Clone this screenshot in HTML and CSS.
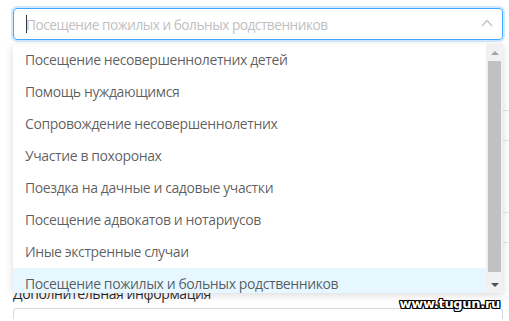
FILE: index.html
```html
<!DOCTYPE html>
<html lang="ru">
<head>
    <meta charset="UTF-8">
    <title>Выбор причины</title>
    <link rel="stylesheet" href="styles.css">
</head>
<body>
    <div class="form">
        <div class="select">
            <span class="caret"></span>
            <span class="placeholder">Посещение пожилых и больных родственников</span>
            <svg class="arrow" width="12" height="8" viewBox="0 0 12 8">
                <path d="M1 7 L6 1.5 L11 7" fill="none" stroke="#bfbfbf" stroke-width="1.2"/>
            </svg>
        </div>

        <div class="field field-one"></div>
        <div class="field field-two"></div>

        <label class="label">Дополнительная информация</label>
        <div class="textarea"></div>

        <div class="dropdown">
            <ul class="options">
                <li>Посещение несовершеннолетних детей</li>
                <li>Помощь нуждающимся</li>
                <li>Сопровождение несовершеннолетних</li>
                <li>Участие в похоронах</li>
                <li>Поездка на дачные и садовые участки</li>
                <li>Посещение адвокатов и нотариусов</li>
                <li>Иные экстренные случаи</li>
                <li class="active">Посещение пожилых и больных родственников</li>
            </ul>
            <div class="scrollbar">
                <span class="btn up"></span>
                <span class="thumb"></span>
                <span class="btn down"></span>
            </div>
        </div>
    </div>
    <div class="watermark">www.tugun.ru</div>
</body>
</html>
```

FILE: styles.css
```css
html {
    height: 321px;
    overflow: hidden;
}
body {
    margin: 0;
    background: #fff;
    font-family: "Open Sans", "Noto Sans", sans-serif;
    font-size: 14px;
    color: rgba(0, 0, 0, 0.65);
    overflow: hidden;
    height: 321px;
    position: relative;
}
.form {
    position: relative;
    padding: 8px 0 0 13px;
    width: 496px;
}
.select {
    height: 30px;
    border: 1px solid #40a9ff;
    border-radius: 4px;
    box-shadow: 0 0 0 2px rgba(24, 144, 255, 0.2);
    display: flex;
    align-items: center;
    padding: 0 9px 0 12px;
    width: 467px;
}
.caret {
    width: 1px;
    height: 18px;
    background: #333;
    margin-right: -1px;
}
.placeholder {
    flex: 1;
    color: #bfbfbf;
    font-size: 13.6px;
    letter-spacing: -0.45px;
}
.arrow {
    margin-top: -2px;
}
.field {
    height: 29px;
    border-top: 1px solid #e4e4e4;
    border-bottom: 1px solid #e4e4e4;
    width: 520px;
}
.field-one {
    margin-top: 70px;
}
.field-two {
    margin-top: 71px;
}
.label {
    display: block;
    margin-top: 40px;
    line-height: 22px;
    color: rgba(0, 0, 0, 0.85);
    letter-spacing: -0.4px;
}
.textarea {
    margin-top: 3px;
    width: 488px;
    height: 10px;
    border: 1px solid #d9d9d9;
    border-bottom: none;
    border-radius: 4px 4px 0 0;
}
.dropdown {
    position: absolute;
    top: 44px;
    left: 13px;
    width: 490px;
    height: 249px;
    background: #fff;
    box-shadow: 0 2px 8px rgba(0, 0, 0, 0.15);
    display: flex;
    overflow: hidden;
}
.options {
    list-style: none;
    margin: 0;
    padding: 0;
    flex: 1;
}
.options li {
    height: 32px;
    line-height: 32px;
    padding: 0 12px;
    white-space: nowrap;
    letter-spacing: -0.4px;
}
.options li.active {
    background: #e6f7ff;
}
.scrollbar {
    width: 17px;
    background: #f1f1f1;
    display: flex;
    flex-direction: column;
    align-items: center;
}
.btn {
    height: 17px;
    width: 17px;
    display: flex;
    align-items: center;
    justify-content: center;
}
.btn::after {
    content: "";
    border-left: 4px solid transparent;
    border-right: 4px solid transparent;
}
.up::after {
    border-bottom: 4px solid #a3a3a3;
}
.down::after {
    border-top: 4px solid #505050;
}
.thumb {
    width: 13px;
    flex: 1;
    background: #c1c1c1;
    margin: 0 0 4px;
}
.watermark {
    position: absolute;
    right: 9px;
    top: 296px;
    font-family: "DejaVu Sans", Verdana, sans-serif;
    font-weight: bold;
    font-size: 13px;
    color: #fff;
    letter-spacing: -0.3px;
    text-shadow: -1px -1px 0 #000, 1px -1px 0 #000, -1px 1px 0 #000, 1px 1px 0 #000, 0 1px 0 #000, 0 -1px 0 #000, 1px 0 0 #000, -1px 0 0 #000;
}
```
